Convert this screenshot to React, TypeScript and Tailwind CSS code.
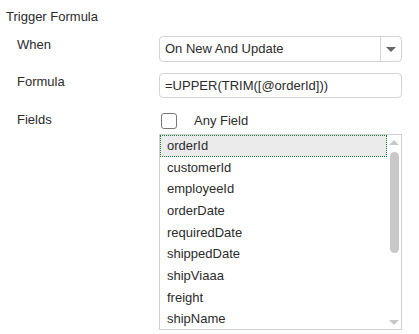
import React from "react";

const fields = [
  "orderId",
  "customerId",
  "employeeId",
  "orderDate",
  "requiredDate",
  "shippedDate",
  "shipViaaa",
  "freight",
  "shipName",
];

export default function App() {
  return (
    <div
      className="w-[419px] h-[334px] bg-white text-[13px] text-[#2b2b2b] overflow-hidden"
      style={{ fontFamily: '"Liberation Sans", Arial, sans-serif' }}
    >
      <div className="pl-[6px] pt-[8px] leading-[18px]">Trigger Formula</div>
      <div className="pl-[17px] mt-[10px] grid grid-cols-[142px_243px] gap-y-[12px]">
        <div className="leading-[18px]">When</div>
        <div className="h-[26px] border border-[#d4d4d4] rounded-[4px] flex items-center">
          <div className="flex-1 pl-[5px] leading-[18px]">On New And Update</div>
          <div className="w-[21px] h-full border-l border-[#d4d4d4] flex items-center justify-center">
            <div className="w-0 h-0 border-l-[5px] border-r-[5px] border-t-[5px] border-l-transparent border-r-transparent border-t-[#666]" />
          </div>
        </div>
        <div className="leading-[18px] -mt-[1px]">Formula</div>
        <div className="h-[25px] -mt-[1px] border border-[#d4d4d4] rounded-[4px] flex items-center pl-[5px] leading-[18px]">
          =UPPER(TRIM([@orderId]))
        </div>
        <div className="leading-[18px] pt-[1px]">Fields</div>
        <div>
          <div className="flex items-center h-[18px] mt-[2px]">
            <div className="ml-[2px] w-[16px] h-[16px] border-[1.5px] border-[#777] rounded-[3px] bg-white" />
            <div className="ml-[17px]">Any Field</div>
          </div>
          <div className="mt-[4px] h-[196px] border border-[#cfcfcf] flex">
            <div className="flex-1">
              {fields.map((f, i) => (
                <div
                  key={f}
                  className={
                    "h-[21.65px] flex items-center " +
                    (i === 0
                      ? "bg-[#ebebeb] border border-dotted border-[#1e7a3c] pl-[6px]"
                      : "pl-[7px]")
                  }
                >
                  {f}
                </div>
              ))}
            </div>
            <div className="w-[14px] flex flex-col items-center pt-[5px] pb-[4px]">
              <div className="w-0 h-0 border-l-[5px] border-r-[5px] border-b-[5px] border-l-transparent border-r-transparent border-b-[#c8c8c8]" />
              <div className="mt-[7px] w-[9px] h-[101px] rounded-[5px] bg-[#c8c8c8]" />
              <div className="flex-1" />
              <div className="w-0 h-0 border-l-[5px] border-r-[5px] border-t-[5px] border-l-transparent border-r-transparent border-t-[#c8c8c8]" />
            </div>
          </div>
        </div>
      </div>
    </div>
  );
}
